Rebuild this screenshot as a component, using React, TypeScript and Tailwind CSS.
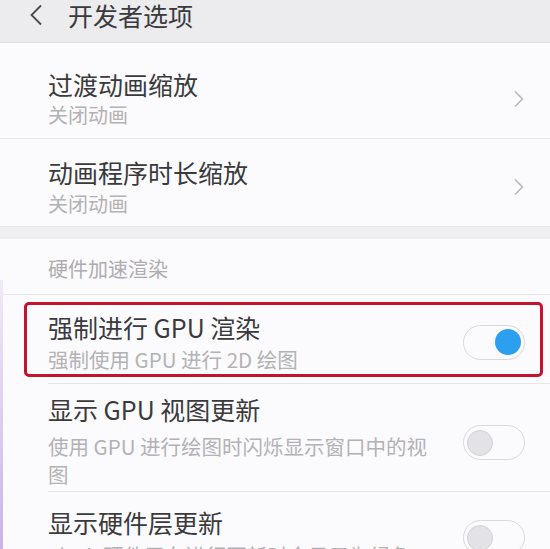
import React from "react";

const font = { fontFamily: '"Noto Sans CJK SC", "Noto Sans", sans-serif' };

function Chevron() {
	return (
		<svg width="12" height="18" viewBox="0 0 12 18" className="shrink-0">
			<path d="M2 1.5 L9.5 9 L2 16.5" fill="none" stroke="#b9b8bc" strokeWidth="1.6" />
		</svg>
	);
}

function Toggle({ on }: { on: boolean }) {
	return (
		<div
			className={`w-[62px] h-[35px] rounded-full border border-[#d9d8dc] bg-[#fbfafc] flex items-center px-[3px] shrink-0 ${
				on ? "justify-end" : "justify-start"
			}`}
		>
			<div
				className={`w-[26px] h-[26px] rounded-full ${
					on ? "bg-[#2d9ff0]" : "bg-[#e3e2e6] border border-[#d3d2d6]"
				}`}
			/>
		</div>
	);
}

export default function App() {
	return (
		<div className="relative w-[550px] h-[549px] overflow-hidden bg-[#f9f8fb]" style={font}>
			{/* header */}
			<div className="h-[43px] bg-[#ecebee] border-b border-[#dcdbdf] flex items-start">
				<svg width="14" height="22" viewBox="0 0 14 22" className="ml-[29px] mt-[4px]">
					<path d="M12 1.5 L2.5 11 L12 20.5" fill="none" stroke="#4a4a4c" strokeWidth="1.8" />
				</svg>
				<span className="ml-[25px] text-[25px] leading-[30px] text-[#3a3a3c]">开发者选项</span>
			</div>

			{/* animation rows */}
			<div className="pt-[8px] bg-[#fbfafc]">
				<div className="flex items-center pl-[48px] pr-[25px] pt-[21px] pb-[13px] border-b border-[#e6e5e9]">
					<div className="flex-1">
						<div className="text-[25px] leading-[25px] text-[#3a3a3c]">过渡动画缩放</div>
						<div className="mt-[8px] text-[20px] leading-[20px] text-[#b3b2b6]">关闭动画</div>
					</div>
					<Chevron />
				</div>
				<div className="flex items-center pl-[48px] pr-[25px] pt-[21px] pb-[12px]">
					<div className="flex-1">
						<div className="text-[25px] leading-[25px] text-[#3a3a3c]">动画程序时长缩放</div>
						<div className="mt-[9px] text-[20px] leading-[20px] text-[#b3b2b6]">关闭动画</div>
					</div>
					<Chevron />
				</div>
			</div>

			<div className="h-[13px] bg-[#efeef1] border-t border-[#e6e5e9]" />

			{/* hardware section */}
			<div className="bg-[#fbfafc]">
				<div className="pl-[48px] pt-[20px] pb-[15px] text-[20px] leading-[20px] text-[#adacb0] border-b border-[#e6e5e9]">
					硬件加速渲染
				</div>

				<div className="relative flex items-center pl-[48px] pr-[25px] pt-[20px] pb-[14px]">
					<div className="flex-1">
						<div className="text-[25px] leading-[25px] text-[#3a3a3c]">强制进行 GPU 渲染</div>
						<div className="mt-[9px] text-[20.5px] leading-[20px] text-[#b3b2b6]">强制使用 GPU 进行 2D 绘图</div>
					</div>
					<Toggle on />
					<div className="absolute left-[24px] right-[7px] top-[7px] bottom-[6px] border-[3px] border-[#c4142d] rounded-[5px]" />
				</div>
				<div className="ml-[48px] border-b border-[#e6e5e9]" />

				<div className="flex items-center pl-[48px] pr-[25px] pt-[13px] pb-[3px]">
					<div className="flex-1">
						<div className="text-[25px] leading-[25px] text-[#3a3a3c]">显示 GPU 视图更新</div>
						<div className="mt-[10px] max-w-[385px] text-[20.5px] leading-[28px] text-[#b3b2b6]">
							使用 GPU 进行绘图时闪烁显示窗口中的视图
						</div>
					</div>
					<Toggle on={false} />
				</div>
				<div className="ml-[48px] border-b border-[#e6e5e9]" />

				<div className="flex items-center pl-[48px] pr-[25px] pt-[18px] pb-[14px]">
					<div className="flex-1">
						<div className="text-[25px] leading-[25px] text-[#3a3a3c]">显示硬件层更新</div>
						<div className="mt-[10px] text-[20.5px] leading-[20px] text-[#b3b2b6]">Flash 硬件层在进行更新时会显示为绿色</div>
					</div>
					<Toggle on={false} />
				</div>
			</div>

			{/* purple edge */}
			<div className="absolute left-0 top-[280px] bottom-0 w-[3px] bg-gradient-to-b from-[#efeaf7] to-[#c7b4ea]" />
		</div>
	);
}
